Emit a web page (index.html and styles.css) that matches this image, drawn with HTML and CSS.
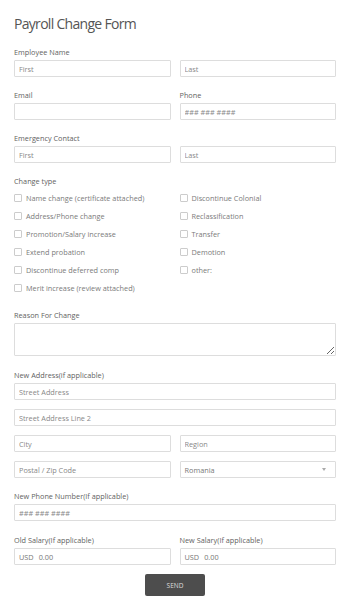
FILE: index.html
```
<!DOCTYPE html>
<html lang="en">
<head>
    <meta charset="UTF-8">
    <meta name="viewport" content="width=device-width, initial-scale=1.0">
    <title>Payroll Change Form</title>
    <link rel="stylesheet" href="styles.css">
</head>
<body>
    <form class="form">
        <h1 class="title">Payroll Change Form</h1>

        <div class="field">
            <label class="label">Employee Name</label>
            <div class="row">
                <input class="input" type="text" placeholder="First">
                <input class="input" type="text" placeholder="Last">
            </div>
        </div>

        <div class="row">
            <div class="field">
                <label class="label">Email</label>
                <input class="input" type="text">
            </div>
            <div class="field">
                <label class="label">Phone</label>
                <input class="input" type="text" placeholder="### ### ####">
            </div>
        </div>

        <div class="field">
            <label class="label">Emergency Contact</label>
            <div class="row">
                <input class="input" type="text" placeholder="First">
                <input class="input" type="text" placeholder="Last">
            </div>
        </div>

        <div class="field">
            <label class="label">Change type</label>
            <div class="checks">
                <label class="check"><span class="box"></span>Name change (certificate attached)</label>
                <label class="check"><span class="box"></span>Discontinue Colonial</label>
                <label class="check"><span class="box"></span>Address/Phone change</label>
                <label class="check"><span class="box"></span>Reclassification</label>
                <label class="check"><span class="box"></span>Promotion/Salary increase</label>
                <label class="check"><span class="box"></span>Transfer</label>
                <label class="check"><span class="box"></span>Extend probation</label>
                <label class="check"><span class="box"></span>Demotion</label>
                <label class="check"><span class="box"></span>Discontinue deferred comp</label>
                <label class="check"><span class="box"></span>other:</label>
                <label class="check"><span class="box"></span>Merit increase (review attached)</label>
            </div>
        </div>

        <div class="field reason">
            <label class="label">Reason For Change</label>
            <textarea class="input textarea"></textarea>
        </div>

        <div class="field">
            <label class="label">New Address(if applicable)</label>
            <div class="stack">
                <input class="input" type="text" placeholder="Street Address">
                <input class="input" type="text" placeholder="Street Address Line 2">
                <div class="row">
                    <input class="input" type="text" placeholder="City">
                    <input class="input" type="text" placeholder="Region">
                </div>
                <div class="row">
                    <input class="input" type="text" placeholder="Postal / Zip Code">
                    <div class="input select">
                        <span>Romania</span>
                        <span class="arrow"></span>
                    </div>
                </div>
            </div>
        </div>

        <div class="field phone">
            <label class="label">New Phone Number(If applicable)</label>
            <input class="input" type="text" placeholder="### ### ####">
        </div>

        <div class="row">
            <div class="field">
                <label class="label">Old Salary(If applicable)</label>
                <div class="input money"><span>USD</span><span>0.00</span></div>
            </div>
            <div class="field">
                <label class="label">New Salary(If applicable)</label>
                <div class="input money"><span>USD</span><span>0.00</span></div>
            </div>
        </div>

        <div class="actions">
            <button class="send" type="button">SEND</button>
        </div>
    </form>
</body>
</html>
```

FILE: styles.css
```
body {
    margin: 0;
    background-color: #fff;
    font-family: "Open Sans", "Liberation Sans", sans-serif;
    color: #555;
}

.form {
    padding: 13px 14px 10px;
}

.title {
    margin: 0 0 12px;
    font-size: 14px;
    font-weight: 400;
    letter-spacing: -0.7px;
    line-height: 22px;
    color: #555;
}

.field {
    display: flex;
    flex-direction: column;
    margin-bottom: 13px;
}

.field.reason {
    margin-bottom: 14px;
}

.field.phone {
    margin-bottom: 14px;
}

.row .field {
    margin-bottom: 0;
}

.row {
    display: grid;
    grid-template-columns: 1fr 1fr;
    gap: 9px;
}

.form > .row {
    margin-bottom: 13px;
}

.stack {
    display: flex;
    flex-direction: column;
    gap: 9px;
}

.label {
    font-size: 7.3px;
    line-height: 10px;
    margin-bottom: 3px;
    color: #626262;
}

.input {
    box-sizing: border-box;
    width: 100%;
    height: 17px;
    margin: 0;
    padding: 0 4px;
    border: 1px solid #ddd;
    border-radius: 1px;
    font-family: inherit;
    font-size: 7.3px;
    color: #777;
    background: #fff;
    outline: none;
}

.input::placeholder {
    color: #888;
}

.textarea {
    height: 33px;
    resize: vertical;
    padding: 3px 4px;
}

.select {
    display: flex;
    align-items: center;
    justify-content: space-between;
}

.arrow {
    width: 0;
    height: 0;
    margin-right: 5px;
    border-left: 2.5px solid transparent;
    border-right: 2.5px solid transparent;
    border-top: 3px solid #aaa;
}

.money {
    display: flex;
    align-items: center;
    gap: 5px;
}

.checks {
    display: grid;
    grid-template-columns: 1fr 1fr;
    column-gap: 9px;
}

.check {
    display: flex;
    align-items: center;
    height: 18px;
    font-size: 7.3px;
    color: #7a7a7a;
}

.box {
    box-sizing: border-box;
    width: 8px;
    height: 8px;
    margin-right: 4px;
    border: 1px solid #ccc;
    border-radius: 1px;
}

.actions {
    display: flex;
    justify-content: center;
    margin-top: -4px;
}

.send {
    width: 60px;
    height: 22px;
    border: none;
    border-radius: 2px;
    background-color: #4d4d4d;
    color: #ddd;
    font-family: inherit;
    font-size: 6.5px;
    cursor: pointer;
}
```
